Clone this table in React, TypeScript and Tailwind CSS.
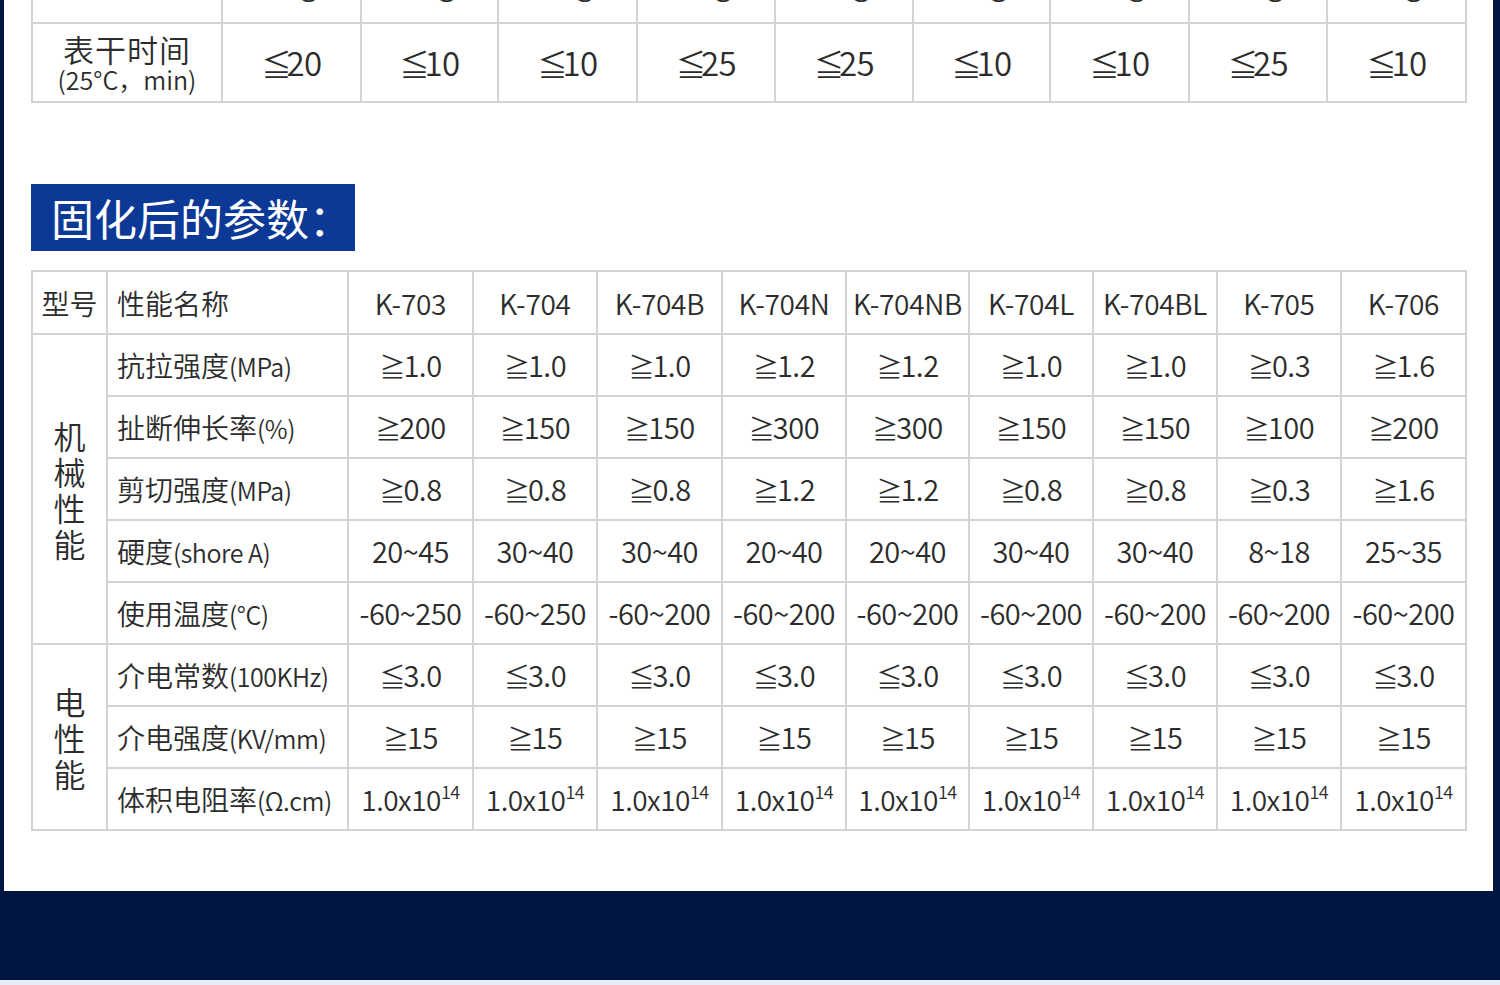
import React from 'react';

const FONT = "font-['Noto_Sans_CJK_SC','Noto_Sans',sans-serif]";

const models = ['K-703', 'K-704', 'K-704B', 'K-704N', 'K-704NB', 'K-704L', 'K-704BL', 'K-705', 'K-706'];

const topCols = [190, 139, 137, 139, 138, 138, 137, 139, 138, 139];
const dryTime = ['≦20', '≦10', '≦10', '≦25', '≦25', '≦10', '≦10', '≦25', '≦10'];
const packing = ['10g', '10g', '10g', '50g', '50g', '10g', '10g', '10g', '10g'];

const bottomCols = [75, 241, 125, 124, 125, 124, 123, 124, 124, 124, 125];

interface Row {
  name: string;
  unit: string;
  values: string[];
}

const mechanical: Row[] = [
  { name: '抗拉强度', unit: '(MPa)', values: ['≧1.0', '≧1.0', '≧1.0', '≧1.2', '≧1.2', '≧1.0', '≧1.0', '≧0.3', '≧1.6'] },
  { name: '扯断伸长率', unit: '(%)', values: ['≧200', '≧150', '≧150', '≧300', '≧300', '≧150', '≧150', '≧100', '≧200'] },
  { name: '剪切强度', unit: '(MPa)', values: ['≧0.8', '≧0.8', '≧0.8', '≧1.2', '≧1.2', '≧0.8', '≧0.8', '≧0.3', '≧1.6'] },
  { name: '硬度', unit: '(shore A)', values: ['20~45', '30~40', '30~40', '20~40', '20~40', '30~40', '30~40', '8~18', '25~35'] },
  { name: '使用温度', unit: '(°C)', values: ['-60~250', '-60~250', '-60~200', '-60~200', '-60~200', '-60~200', '-60~200', '-60~200', '-60~200'] },
];

const electrical: Row[] = [
  { name: '介电常数', unit: '(100KHz)', values: Array(9).fill('≦3.0') },
  { name: '介电强度', unit: '(KV/mm)', values: Array(9).fill('≧15') },
  { name: '体积电阻率', unit: '(Ω.cm)', values: Array(9).fill('EXP') },
];

const cell = 'border-2 border-[#d3d3d3] text-center align-middle p-0 whitespace-nowrap';

const Value: React.FC<{ v: string }> = ({ v }) => {
  if (v === 'EXP') {
    return (
      <span className="text-[28px] tracking-[-0.5px]">
        1.0x10<sup className="text-[18px] align-baseline relative -top-[12px]">14</sup>
      </span>
    );
  }
  const sym = v[0] === '≧' || v[0] === '≦' ? v[0] : '';
  const rest = sym ? v.slice(1) : v;
  return (
    <span className="text-[29px] tracking-[-0.5px]">
      {sym && <span className="inline-block w-[22px] text-[26px] mr-[2px]">{sym}</span>}
      {rest}
    </span>
  );
};

const PropRows: React.FC<{ group: string; rows: Row[] }> = ({ group, rows }) => (
  <>
    {rows.map((r, i) => (
      <tr key={r.name} className="h-[62px]">
        {i === 0 && (
          <td rowSpan={rows.length} className={cell}>
            <div className="flex flex-col items-center text-[32px] leading-[36px]">
              {group.split('').map((c) => (
                <span key={c}>{c}</span>
              ))}
            </div>
          </td>
        )}
        <td className={`${cell} text-left pl-[9px]`}>
          <span className="text-[28px]">{r.name}</span>
          <span className="text-[25px] tracking-[-0.5px]">{r.unit}</span>
        </td>
        {r.values.map((v, j) => (
          <td key={j} className={cell}>
            <Value v={v} />
          </td>
        ))}
      </tr>
    ))}
  </>
);

export default function App() {
  return (
    <div className={`w-[1500px] h-[985px] overflow-hidden bg-[#011541] flex flex-col text-[#2c2c2c] font-[350] ${FONT}`}>
      <div className="ml-[4px] w-[1489px] h-[891px] bg-white pl-[27px] overflow-hidden">
        {/* upper table, scrolled partly out of view */}
        <table className="table-fixed border-collapse w-[1434px] -mt-[58px]">
          <colgroup>
            {topCols.map((w, i) => (
              <col key={i} style={{ width: w }} />
            ))}
          </colgroup>
          <tbody>
            <tr className="h-[81px]">
              <td className={`${cell} border-t-0 text-[31px]`}>包装规格</td>
              {packing.map((p, i) => (
                <td key={i} className={`${cell} border-t-0 text-[31px]`}>
                  {p}
                </td>
              ))}
            </tr>
            <tr className="h-[79px]">
              <td className={cell}>
                <div className="flex flex-col items-center">
                  <span className="text-[31px] leading-[32px] tracking-[1px]">表干时间</span>
                  <span className="text-[25px] leading-[28px]">(25°C，min)</span>
                </div>
              </td>
              {dryTime.map((v, i) => (
                <td key={i} className={cell}>
                  <span className="text-[33px] tracking-[-0.5px]">
                    <span className="inline-block w-[24px] text-[30px] mr-[1px]">{v[0]}</span>
                    {v.slice(1)}
                  </span>
                </td>
              ))}
            </tr>
          </tbody>
        </table>

        <div className="mt-[81px] w-[324px] h-[67px] bg-[#0b3995] flex items-center pl-[20px]">
          <span className="text-white text-[43px] leading-none font-normal">固化后的参数：</span>
        </div>

        <table className="table-fixed border-collapse w-[1434px] mt-[19px]">
          <colgroup>
            {bottomCols.map((w, i) => (
              <col key={i} style={{ width: w }} />
            ))}
          </colgroup>
          <tbody>
            <tr className="h-[63px]">
              <td className={`${cell} text-[28px]`}>型号</td>
              <td className={`${cell} text-left pl-[9px] text-[28px]`}>性能名称</td>
              {models.map((m) => (
                <td key={m} className={`${cell} text-[28px] tracking-[-0.3px]`}>
                  {m}
                </td>
              ))}
            </tr>
            <PropRows group="机械性能" rows={mechanical} />
            <PropRows group="电性能" rows={electrical} />
          </tbody>
        </table>
      </div>
      <div className="flex-1" />
      <div className="h-[5px] bg-[#e8ecf3]" />
    </div>
  );
}
